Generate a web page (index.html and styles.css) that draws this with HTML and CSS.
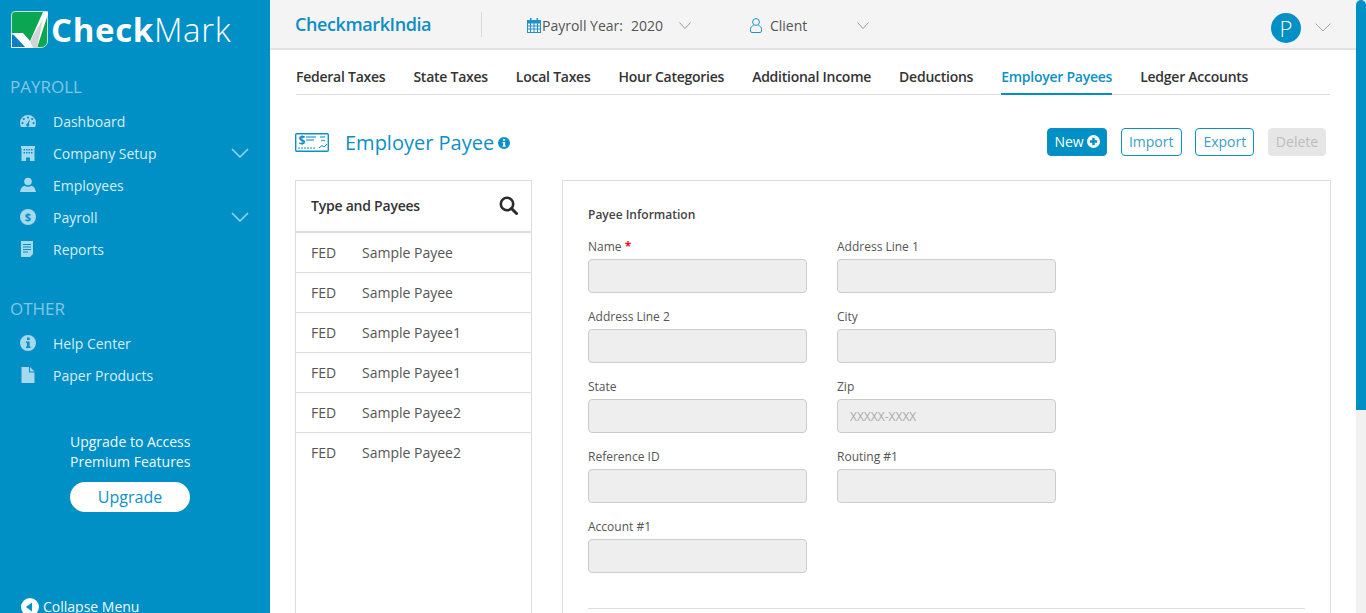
FILE: index.html
```html
<!DOCTYPE html>
<html lang="en">
<head>
    <meta charset="UTF-8">
    <meta name="viewport" content="width=device-width, initial-scale=1.0">
    <title>Employer Payee</title>
    <link rel="stylesheet" href="styles.css">
</head>
<body>
    <aside class="sidebar">
        <div class="logo">
            <svg class="logo-mark" width="37" height="38" viewBox="0 0 37 38">
                <path d="M4 .5H36.500V30a6.500 6.500 0 0 1-6.500 6.500H.5V4A3.500 3.500 0 0 1 4 .5z" fill="#0aa650" stroke="#bfe6d0"/>
                <path d="M.5 23H12L22 36.500H.5z" fill="#0f7fc4" stroke="#fff"/>
                <path d="M1 22H12L19 30 32 1H37V3L26 37H15z" fill="#fff"/>
                <path d="M19 30 32 8 26 37H22z" fill="#d4d4d4"/>
            </svg>
            <span class="logo-text"><b>Check</b>Mark</span>
        </div>

        <div class="side-label">PAYROLL</div>
        <ul class="side-menu">
            <li>
                <svg class="side-icon" viewBox="0 0 16 16"><path fill-rule="evenodd" d="M8 2a8 8 0 0 1 8 8c0 1.500-.4 2.800-1 4H1c-.6-1.200-1-2.500-1-4a8 8 0 0 1 8-8zM8 3.400a1.100 1.100 0 1 0 0 2.200 1.100 1.100 0 0 0 0-2.200zM3.800 5a1.100 1.100 0 1 0 0 2.200 1.100 1.100 0 0 0 0-2.200zM12.200 5a1.100 1.100 0 1 0 0 2.200 1.100 1.100 0 0 0 0-2.200zM2.400 9a1.100 1.100 0 1 0 0 2.200 1.100 1.100 0 0 0 0-2.200zM13.600 9a1.100 1.100 0 1 0 0 2.200 1.100 1.100 0 0 0 0-2.200zM9.800 6 7.300 10.500a1.600 1.600 0 1 0 1.700.5z"/></svg>
                <span>Dashboard</span>
            </li>
            <li>
                <svg class="side-icon" viewBox="0 0 16 16"><path fill-rule="evenodd" d="M1 1H15V3H14.500V16H10V12.500H6V16H1.500V3H1zM3.500 4V5.500H5V4zM6 4V5.500H7.500V4zM8.500 4V5.500H10V4zM11 4V5.500H12.500V4zM3.500 7V8.500H5V7zM6 7V8.500H7.500V7zM8.500 7V8.500H10V7zM11 7V8.500H12.500V7z"/></svg>
                <span>Company Setup</span>
                <svg class="side-chevron" viewBox="0 0 18 10"><path d="M1 1l8 8 8-8"/></svg>
            </li>
            <li>
                <svg class="side-icon" viewBox="0 0 16 16"><circle cx="8" cy="4.500" r="3.800"/><path d="M0 15c.6-3.800 2.600-6 4.500-6.200 2.200 1.300 4.800 1.300 7 0 1.900.2 3.900 2.400 4.500 6.200z"/></svg>
                <span>Employees</span>
            </li>
            <li>
                <svg class="side-icon" viewBox="0 0 16 16"><circle cx="8" cy="8" r="8"/><text class="dollar" x="8" y="11.700" text-anchor="middle">$</text></svg>
                <span>Payroll</span>
                <svg class="side-chevron" viewBox="0 0 18 10"><path d="M1 1l8 8 8-8"/></svg>
            </li>
            <li>
                <svg class="side-icon" viewBox="0 0 16 16"><path fill-rule="evenodd" d="M1 0H13V13L10 16H1zM3 3V4H11V3zM3 5.500V6.500H11V5.500zM3 8V9H11V8zM3 10.500V11.500H8V10.500z"/></svg>
                <span>Reports</span>
            </li>
        </ul>

        <div class="side-label side-label-other">OTHER</div>
        <ul class="side-menu">
            <li>
                <svg class="side-icon" viewBox="0 0 16 16"><path fill-rule="evenodd" d="M8 0a8 8 0 1 1 0 16A8 8 0 0 1 8 0zM7 2.500V5H9.600V2.500zM6 6.500V8H7V11.500H6V13H10.500V11.500H9.600V6.500z"/></svg>
                <span>Help Center</span>
            </li>
            <li>
                <svg class="side-icon" viewBox="0 0 16 16"><path d="M1.500 0H9V5.500H14.500V16H1.500zM10 0l4.500 4.500H10z"/></svg>
                <span>Paper Products</span>
            </li>
        </ul>

        <div class="upgrade">
            <p>Upgrade to Access<br>Premium Features</p>
            <a class="upgrade-btn">Upgrade</a>
        </div>

        <div class="collapse-menu">
            <svg width="18" height="18" viewBox="0 0 18 18"><circle cx="9" cy="9" r="9" fill="#fff"/><path d="M5 9l6-4.500v9z" fill="#0090c6"/></svg>
            <span>Collapse Menu</span>
        </div>
    </aside>

    <div class="main">
        <header class="topbar">
            <div class="company">CheckmarkIndia</div>
            <div class="topbar-item item-year">
                <svg class="cal-icon" width="14" height="15" viewBox="0 0 14 15"><path fill-rule="evenodd" d="M3 0H4.500V2H9.500V0H11V2H14V15H0V2H3zM1 5.500V7.500H3V5.500zM4 5.500V7.500H6.500V5.500zM7.500 5.500V7.500H10V5.500zM11 5.500V7.500H13V5.500zM1 8.500V10.500H3V8.500zM4 8.500V10.500H6.500V8.500zM7.500 8.500V10.500H10V8.500zM11 8.500V10.500H13V8.500zM1 11.500V14H3V11.500zM4 11.500V14H6.500V11.500zM7.500 11.500V14H10V11.500zM11 11.500V14H13V11.500z"/></svg>
                <span>Payroll Year:</span>
                <span class="year-value">2020</span>
                <svg class="top-chevron" viewBox="0 0 12 7"><path d="M.5.500 6 6.500 11.500.500"/></svg>
            </div>
            <div class="topbar-item item-client">
                <svg class="user-icon" width="12" height="15" viewBox="0 0 12 15"><circle cx="6" cy="4" r="3.400"/><path d="M3.500 7.500C1.500 8 .5 9.500.5 11.500v1.500a1.500 1.500 0 0 0 1.500 1.500h8a1.500 1.500 0 0 0 1.500-1.500v-1.500c0-2-1-3.500-3-4"/></svg>
                <span>Client</span>
                <svg class="top-chevron chevron-client" viewBox="0 0 12 7"><path d="M.5.500 6 6.500 11.500.500"/></svg>
            </div>
            <div class="avatar">P</div>
            <svg class="user-chevron" viewBox="0 0 16 9"><path d="M.5.500 8 8 15.500.500"/></svg>
        </header>

        <div class="content">
            <nav class="tabs">
                <a>Federal Taxes</a>
                <a>State Taxes</a>
                <a>Local Taxes</a>
                <a>Hour Categories</a>
                <a>Additional Income</a>
                <a>Deductions</a>
                <a class="active">Employer Payees</a>
                <a>Ledger Accounts</a>
            </nav>

            <div class="title-row">
                <svg class="check-icon" width="35" height="20" viewBox="0 0 35 20">
                    <rect x=".7" y=".7" width="32.600" height="17.600" rx="1" fill="none" stroke="#0d90c5" stroke-width="1.400"/>
                    <text class="check-dollar" x="3.500" y="12">$</text>
                    <path d="M11 4H21M11 7H19" stroke="#4fb0d8" stroke-width="1.500" fill="none"/>
                    <path d="M25 4H30M26 7.500H30" stroke="#4fb0d8" stroke-width="1.500" fill="none"/>
                    <path d="M3 15H21" stroke="#0d90c5" fill="none" stroke-dasharray="2 1"/>
                    <path d="M24 15l3-2.500 2 1.500 3-3" stroke="#0d90c5" fill="none"/>
                </svg>
                <h1>Employer Payee</h1>
                <svg class="title-info" width="12" height="12" viewBox="0 0 16 16"><path fill-rule="evenodd" d="M8 0a8 8 0 1 1 0 16A8 8 0 0 1 8 0zM6.800 2.500V5H9.500V2.500zM6 6.500V8H7V11.500H6V13H10.500V11.500H9.500V6.500z"/></svg>
                <div class="actions">
                    <a class="btn btn-new">New
                        <svg width="13" height="13" viewBox="0 0 16 16"><path fill="#fff" fill-rule="evenodd" d="M8 0a8 8 0 1 1 0 16A8 8 0 0 1 8 0zM6.500 3.500V6.500H3.500V9.500H6.500V12.500H9.500V9.500H12.500V6.500H9.500V3.500z"/></svg>
                    </a>
                    <a class="btn btn-import">Import</a>
                    <a class="btn btn-export">Export</a>
                    <a class="btn btn-delete">Delete</a>
                </div>
            </div>

            <div class="panels">
                <section class="payee-list">
                    <div class="list-head">
                        <span>Type and Payees</span>
                        <svg width="19" height="19" viewBox="0 0 19 19"><circle cx="8" cy="8" r="6.200" fill="none" stroke="#2b2b2b" stroke-width="2.600"/><path d="M12.500 12.500 17.500 17.500" stroke="#2b2b2b" stroke-width="3" stroke-linecap="round"/></svg>
                    </div>
                    <div class="list-row"><span class="row-type">FED</span><span>Sample Payee</span></div>
                    <div class="list-row"><span class="row-type">FED</span><span>Sample Payee</span></div>
                    <div class="list-row"><span class="row-type">FED</span><span>Sample Payee1</span></div>
                    <div class="list-row"><span class="row-type">FED</span><span>Sample Payee1</span></div>
                    <div class="list-row"><span class="row-type">FED</span><span>Sample Payee2</span></div>
                    <div class="list-row"><span class="row-type">FED</span><span>Sample Payee2</span></div>
                </section>

                <section class="payee-form">
                    <h2>Payee Information</h2>
                    <div class="form-grid">
                        <div class="field"><label>Name <em>*</em></label><input type="text"></div>
                        <div class="field"><label>Address Line 1</label><input type="text"></div>
                        <div class="field"><label>Address Line 2</label><input type="text"></div>
                        <div class="field"><label>City</label><input type="text"></div>
                        <div class="field"><label>State</label><input type="text"></div>
                        <div class="field"><label>Zip</label><input type="text" placeholder="XXXXX-XXXX"></div>
                        <div class="field"><label>Reference ID</label><input type="text"></div>
                        <div class="field"><label>Routing #1</label><input type="text"></div>
                        <div class="field"><label>Account #1</label><input type="text"></div>
                    </div>
                    <hr class="form-line">
                </section>
            </div>
        </div>
    </div>

    <div class="scroll-track"><div class="scroll-thumb"></div></div>
</body>
</html>
```

FILE: styles.css
```css
* {
    box-sizing: border-box;
}

html,
body {
    height: 100%;
}

body {
    margin: 0;
    display: flex;
    overflow: hidden;
    font-family: "Open Sans", sans-serif;
    font-size: 14px;
    color: #333;
    background-color: #fff;
}

/* sidebar */
.sidebar {
    position: relative;
    flex: 0 0 270px;
    height: 100%;
    overflow: hidden;
    padding-top: 11px;
    background-color: #0090c6;
    color: #d7eef8;
}

.logo {
    display: flex;
    align-items: flex-start;
    padding-left: 11px;
    height: 38px;
}

.logo-mark {
    flex: none;
}

.logo-text {
    margin-left: 3px;
    font-size: 33px;
    line-height: 38px;
    font-weight: 300;
    color: #fff;
    letter-spacing: .65px;
}

.logo-text b {
    font-weight: 700;
}

.side-label {
    margin: 27px 0 7px 10px;
    font-size: 17px;
    line-height: 22px;
    color: #80c7e4;
}

.side-label-other {
    margin-top: 33px;
    margin-bottom: 7px;
}

.side-menu {
    list-style: none;
    margin: 0;
    padding: 0;
}

.side-menu li {
    display: flex;
    align-items: center;
    height: 32px;
    padding-left: 20px;
}

.side-icon {
    flex: none;
    width: 16px;
    height: 16px;
    margin-right: 17px;
    fill: #a6d9ee;
}

.dollar {
    font-size: 11px;
    font-weight: 700;
    fill: #0090c6;
}

.side-chevron {
    width: 18px;
    height: 10px;
    margin-left: auto;
    margin-right: 21px;
    fill: none;
    stroke: #a6d9ee;
    stroke-width: 1.300;
}

.upgrade {
    margin: 41px 0 0 70px;
    width: 120px;
    color: #f0f9fd;
}

.upgrade p {
    margin: 0 0 10px;
    line-height: 20px;
    white-space: nowrap;
}

.upgrade-btn {
    display: block;
    height: 30px;
    line-height: 30px;
    border-radius: 15px;
    background-color: #fff;
    color: #0d90c5;
    font-size: 16px;
    text-align: center;
}

.collapse-menu {
    position: absolute;
    left: 21px;
    top: 597px;
    display: flex;
    align-items: center;
    gap: 4px;
    color: #f0f9fd;
}

/* top bar */
.main {
    flex: 0 0 1086px;
    height: 100%;
    overflow: hidden;
}

.topbar {
    position: relative;
    display: flex;
    align-items: center;
    height: 50px;
    padding-left: 25px;
    background-color: #f4f4f4;
    border-bottom: 2px solid #e2e2e2;
    color: #555;
}

.company {
    width: 187px;
    height: 25px;
    font-size: 18px;
    line-height: 25px;
    font-weight: 550;
    color: #0d8ec4;
    letter-spacing: -.4px;
    border-right: 1px solid #d9d9d9;
}

.topbar-item {
    display: flex;
    align-items: center;
    margin-top: 2px;
}

.item-year {
    margin-left: 45px;
}

.item-client {
    margin-left: 59px;
}

.cal-icon {
    margin-right: 1px;
    fill: #1f93c9;
}

.year-value {
    margin-left: 8px;
}

.top-chevron {
    width: 12px;
    height: 7px;
    margin-left: 16px;
    fill: none;
    stroke: #9a9a9a;
}

.chevron-client {
    margin-left: 50px;
}

.user-icon {
    margin-right: 8px;
    fill: none;
    stroke: #1f93c9;
}

.avatar {
    position: absolute;
    left: 1001px;
    top: 13px;
    width: 30px;
    height: 30px;
    border-radius: 50%;
    background-color: #0090c6;
    color: #fff;
    font-size: 22px;
    font-weight: 300;
    line-height: 30px;
    text-align: center;
}

.user-chevron {
    position: absolute;
    left: 1045px;
    top: 23px;
    width: 16px;
    height: 9px;
    fill: none;
    stroke: #a8a8a8;
}

/* tabs */
.content {
    padding: 0 26px;
}

.tabs {
    display: flex;
    gap: 28px;
    height: 45px;
    border-bottom: 1px solid #ddd;
}

.tabs a {
    height: 45px;
    line-height: 54px;
    font-weight: 550;
    letter-spacing: -.25px;
    color: #333;
    white-space: nowrap;
}

.tabs a.active {
    color: #0d90c5;
    border-bottom: 2px solid #0090c6;
}

/* title */
.title-row {
    display: flex;
    align-items: center;
    height: 85px;
    margin-left: -1px;
    padding-top: 10px;
}

.check-dollar {
    font-size: 12px;
    font-weight: 700;
    fill: #0d90c5;
}

h1 {
    margin: 0 4px 0 15px;
    font-size: 20px;
    font-weight: 400;
    color: #0d90c5;
}

.title-info {
    fill: #0d90c5;
}

.actions {
    display: flex;
    gap: 13.667px;
    margin-left: auto;
    margin-right: 4px;
    margin-top: -2px;
}

.btn {
    display: flex;
    align-items: center;
    justify-content: center;
    gap: 3px;
    height: 28px;
    border: 1px solid #0d90c5;
    border-radius: 4px;
    color: #3b9ec9;
}

.btn-new {
    width: 60px;
    background-color: #0090c6;
    color: #fff;
}

.btn-import {
    width: 61px;
}

.btn-export {
    width: 59px;
}

.btn-delete {
    width: 58px;
    border-color: #e6e6e6;
    background-color: #e6e6e6;
    color: #bdbdbd;
}

/* panels */
.panels {
    display: flex;
    align-items: flex-start;
    gap: 30px;
    margin: 0 -1px;
}

.payee-list {
    flex: 0 0 237px;
    height: 600px;
    border: 1px solid #ddd;
    color: #555;
}

.list-head {
    display: flex;
    align-items: center;
    justify-content: space-between;
    height: 52px;
    padding: 0 13px 2px 15px;
    border-bottom: 2px solid #ddd;
    font-weight: 550;
    letter-spacing: -.23px;
    color: #333;
}

.list-row {
    display: flex;
    align-items: center;
    height: 40px;
    padding-left: 15px;
    border-bottom: 1px solid #ddd;
}

.list-row:last-child {
    border-bottom-color: transparent;
}

.row-type {
    width: 51px;
}

.payee-form {
    flex: 1;
    height: 600px;
    padding: 25px;
    border: 1px solid #ddd;
}

h2 {
    margin: 0 0 16px;
    font-size: 12px;
    line-height: 17px;
    font-weight: 550;
    color: #444;
}

.form-grid {
    display: grid;
    grid-template-columns: 219px 219px;
    column-gap: 30px;
    row-gap: 16px;
}

.field label {
    display: block;
    height: 20px;
    font-size: 12px;
    line-height: 16px;
    color: #555;
}

.field em {
    font-style: normal;
    font-weight: 700;
    color: #e8141e;
}

.field input {
    display: block;
    width: 100%;
    height: 34px;
    padding: 0 12px;
    border: 1px solid #ccc;
    border-radius: 4px;
    background-color: #eee;
    font-family: "Open Sans", sans-serif;
    font-size: 12px;
}

.field input::placeholder {
    color: #aaa;
}

.form-line {
    margin: 35px 0 0;
    border: 0;
    border-top: 1px solid #ddd;
}

/* page scrollbar */
.scroll-track {
    flex: 0 0 10px;
    height: 100%;
    background-color: #f1f1f1;
}

.scroll-thumb {
    height: 410px;
    border-radius: 5px 5px 0 0;
    background-color: #0090c6;
}
```
